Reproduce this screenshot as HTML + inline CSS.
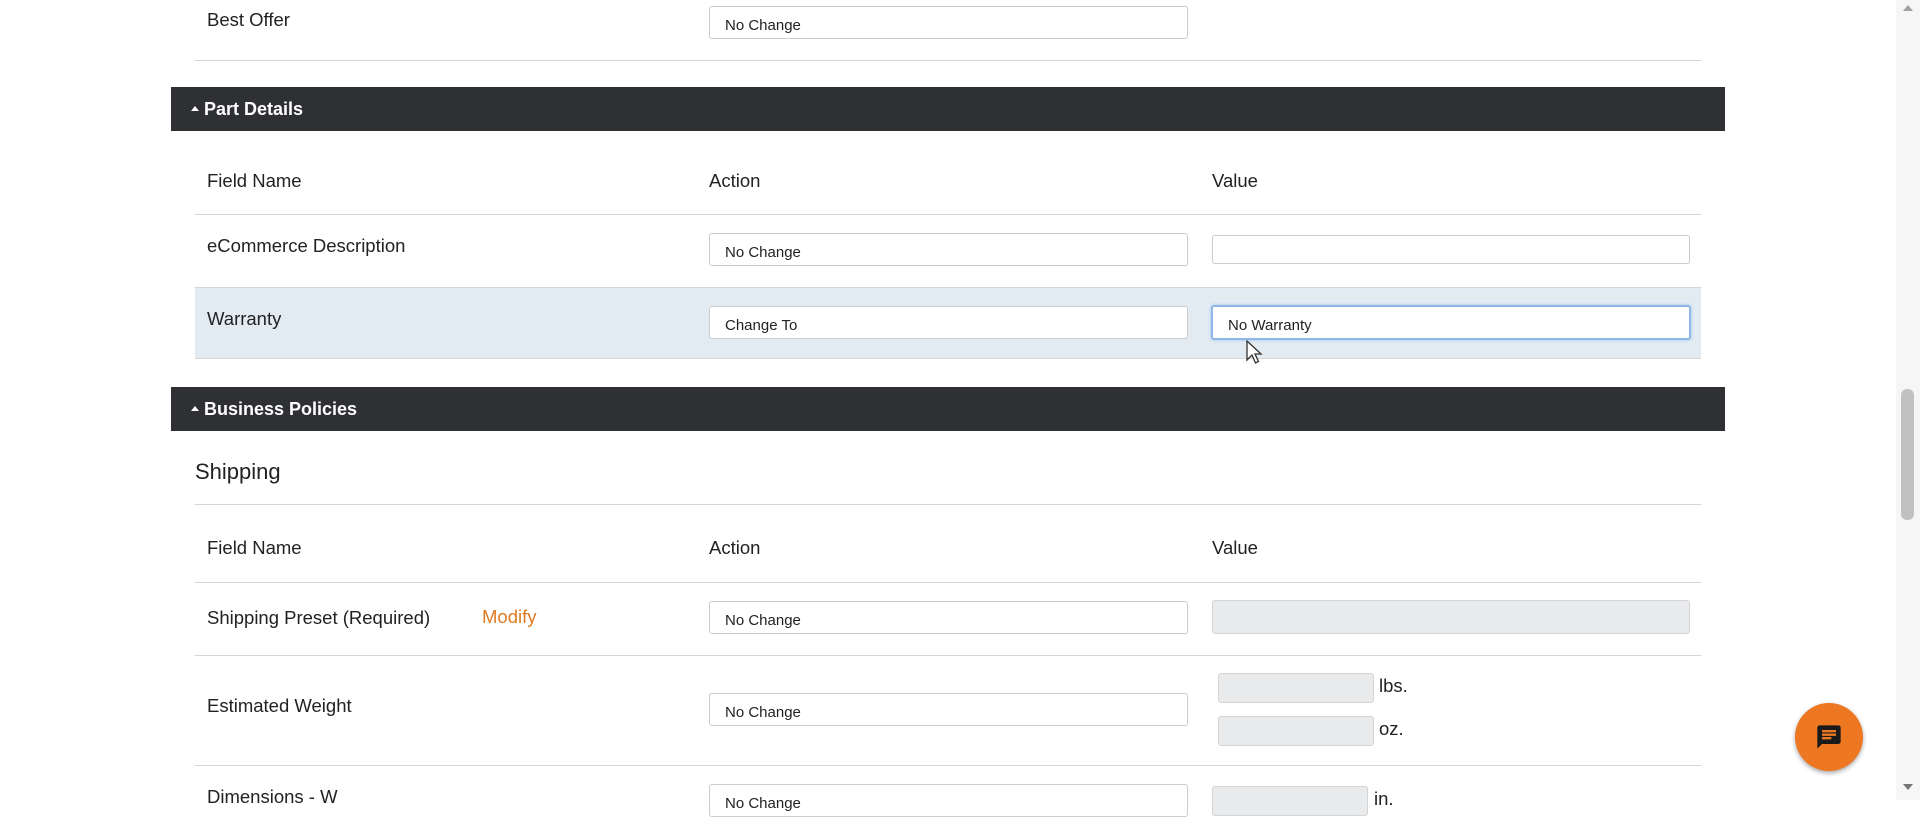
<!DOCTYPE html>
<html><head><meta charset="utf-8"><style>
*{box-sizing:border-box;margin:0;padding:0}
body{width:1920px;height:800px;overflow:hidden;background:#fff;font-family:"Liberation Sans",Arial,sans-serif;color:#222;position:relative}
.a{position:absolute}
.t{font-size:18.5px;color:#222;line-height:1}
.sel{position:absolute;left:709px;width:479px;height:33px;border:1px solid #ccc;border-radius:3px;background:#fff;font-size:15px;padding:11px 0 0 15px;line-height:1;color:#222}
.inp{position:absolute;border:1px solid #ccc;border-radius:3px;background:#fff}
.gr{background:#e9eaec;border-color:#d4d4d4}
.line{position:absolute;left:195px;width:1506px;height:1px;background:#d6d6d6}
.bar{position:absolute;left:171px;width:1554px;height:44px;background:#2e3033;color:#fff;font-weight:bold;font-size:18px;padding:13px 0 0 33px;line-height:1}
.bar:before{content:"";position:absolute;left:20px;top:19px;border-left:4px solid transparent;border-right:4px solid transparent;border-bottom:5px solid #fff}
</style></head><body>
<div class="a t" style="left:207px;top:11px">Best Offer</div>
<div class="sel" style="top:6px">No Change</div>
<div class="line" style="top:60px"></div>

<div class="bar" style="top:87px">Part Details</div>
<div class="a t" style="left:207px;top:172px">Field Name</div>
<div class="a t" style="left:709px;top:172px">Action</div>
<div class="a t" style="left:1212px;top:172px">Value</div>
<div class="line" style="top:214px"></div>
<div class="a t" style="left:207px;top:237px">eCommerce Description</div>
<div class="sel" style="top:233px">No Change</div>
<div class="inp" style="left:1212px;top:235px;width:478px;height:29px"></div>
<div class="a" style="left:195px;top:287px;width:1506px;height:72px;background:#e3ebf2;border-top:1px solid #d6d6d6;border-bottom:1px solid #d6d6d6"></div>
<div class="a t" style="left:207px;top:310px">Warranty</div>
<div class="sel" style="top:306px">Change To</div>
<div class="sel" style="top:305px;left:1211px;width:480px;height:35px;border:2px solid #8fb8e8;box-shadow:0 0 3px #9ec3ee;padding-left:15px">No Warranty</div>
<svg class="a" style="left:1246px;top:340px" width="18" height="26" viewBox="0 0 18 26"><path d="M1 1 L1 20 L6 15 L9.5 23 L12.5 21.5 L9 14 L15 14 Z" fill="#fff" stroke="#333" stroke-width="1.3"/></svg>

<div class="bar" style="top:387px">Business Policies</div>
<div class="a" style="left:195px;top:459px;font-size:22px;color:#222">Shipping</div>
<div class="line" style="top:504px"></div>
<div class="a t" style="left:207px;top:539px">Field Name</div>
<div class="a t" style="left:709px;top:539px">Action</div>
<div class="a t" style="left:1212px;top:539px">Value</div>
<div class="line" style="top:582px"></div>
<div class="a t" style="left:207px;top:609px">Shipping Preset (Required)</div>
<div class="a t" style="left:482px;top:608px;color:#e07a22">Modify</div>
<div class="sel" style="top:601px">No Change</div>
<div class="inp gr" style="left:1212px;top:600px;width:478px;height:34px"></div>
<div class="line" style="top:655px"></div>
<div class="a t" style="left:207px;top:697px">Estimated Weight</div>
<div class="sel" style="top:693px">No Change</div>
<div class="inp gr" style="left:1218px;top:673px;width:156px;height:30px"></div>
<div class="a t" style="left:1379px;top:677px">lbs.</div>
<div class="inp gr" style="left:1218px;top:716px;width:156px;height:30px"></div>
<div class="a t" style="left:1379px;top:720px">oz.</div>
<div class="line" style="top:765px"></div>
<div class="a t" style="left:207px;top:788px">Dimensions - W</div>
<div class="sel" style="top:784px">No Change</div>
<div class="inp gr" style="left:1212px;top:786px;width:156px;height:30px"></div>
<div class="a t" style="left:1374px;top:790px">in.</div>

<div class="a" style="left:1795px;top:703px;width:68px;height:68px;border-radius:50%;background:#ee7722;box-shadow:0 2px 5px rgba(0,0,0,.35)"></div>
<svg class="a" style="left:1815px;top:723px" width="28" height="28" viewBox="0 0 24 24"><path d="M20 2H4c-1.1 0-2 .9-2 2v18l4-4h14c1.1 0 2-.9 2-2V4c0-1.1-.9-2-2-2zM6 9h12v2H6V9zm8 5H6v-2h8v2zm4-6H6V6h12v2z" fill="#1a1a1a"/></svg>

<div class="a" style="left:1896px;top:0;width:24px;height:800px;background:#f6f6f6"></div>
<div class="a" style="left:1903px;top:5px;border-left:5px solid transparent;border-right:5px solid transparent;border-bottom:6px solid #a0a0a0"></div>
<div class="a" style="left:1901px;top:389px;width:13px;height:131px;background:#c1c1c1;border-radius:6px"></div>
<div class="a" style="left:1903px;top:784px;border-left:5px solid transparent;border-right:5px solid transparent;border-top:6px solid #777"></div>
</body></html>
